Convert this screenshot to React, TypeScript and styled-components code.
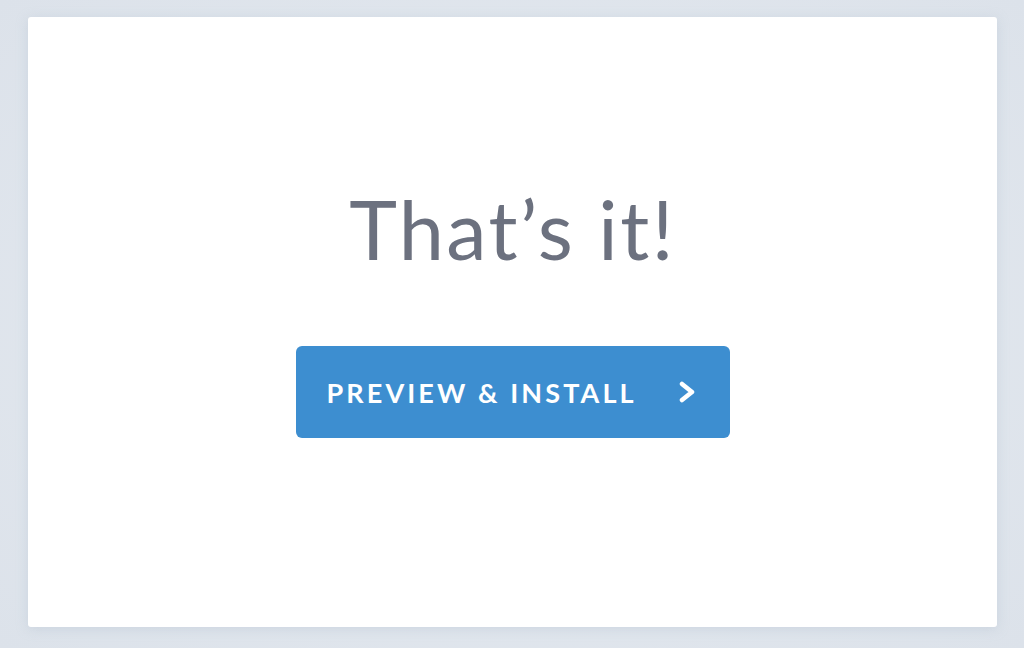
import React from 'react';
import styled, { createGlobalStyle } from 'styled-components';

const GlobalStyle = createGlobalStyle`
  html, body {
    margin: 0;
    padding: 0;
    background: #dde3ea;
  }
  * {
    box-sizing: border-box;
  }
`;

const Page = styled.div`
  width: 1024px;
  height: 648px;
  padding: 17px 27px 21px 28px;
  background: radial-gradient(ellipse at center, #e6ebf1 0%, #dce2ea 100%);
  display: flex;
`;

const Card = styled.div`
  flex: 1;
  background: #ffffff;
  border-radius: 3px;
  box-shadow: 0 2px 12px rgba(170, 182, 200, 0.35);
  display: flex;
  flex-direction: column;
  align-items: center;
  padding-top: 170px;
  font-family: Lato, "Open Sans", sans-serif;
`;

const Title = styled.h1`
  margin: 0 0 75px;
  font-size: 81px;
  line-height: 84px;
  font-weight: 400;
  color: #6c717f;
  letter-spacing: 2.4px;
`;

const Button = styled.button`
  width: 434px;
  height: 92px;
  border: none;
  border-radius: 6px;
  background: #3d8ed0;
  color: #ffffff;
  display: flex;
  align-items: center;
  justify-content: space-between;
  padding: 0 32px 0 31px;
  font-family: Lato, "Open Sans", sans-serif;
  font-size: 27px;
  font-weight: 700;
  letter-spacing: 3.1px;
  cursor: pointer;
`;

const Chevron = styled.svg`
  width: 22px;
  height: 22px;
`;

export default function App() {
  return (
    <>
      <GlobalStyle />
      <Page>
        <Card>
          <Title>That’s it!</Title>
          <Button>
            <span>PREVIEW &amp; INSTALL</span>
            <Chevron viewBox="0 0 22 22">
              <path d="M6 3 L16 11 L6 19" fill="none" stroke="#fff" strokeWidth="4.5" strokeLinecap="round" strokeLinejoin="round" />
            </Chevron>
          </Button>
        </Card>
      </Page>
    </>
  );
}
